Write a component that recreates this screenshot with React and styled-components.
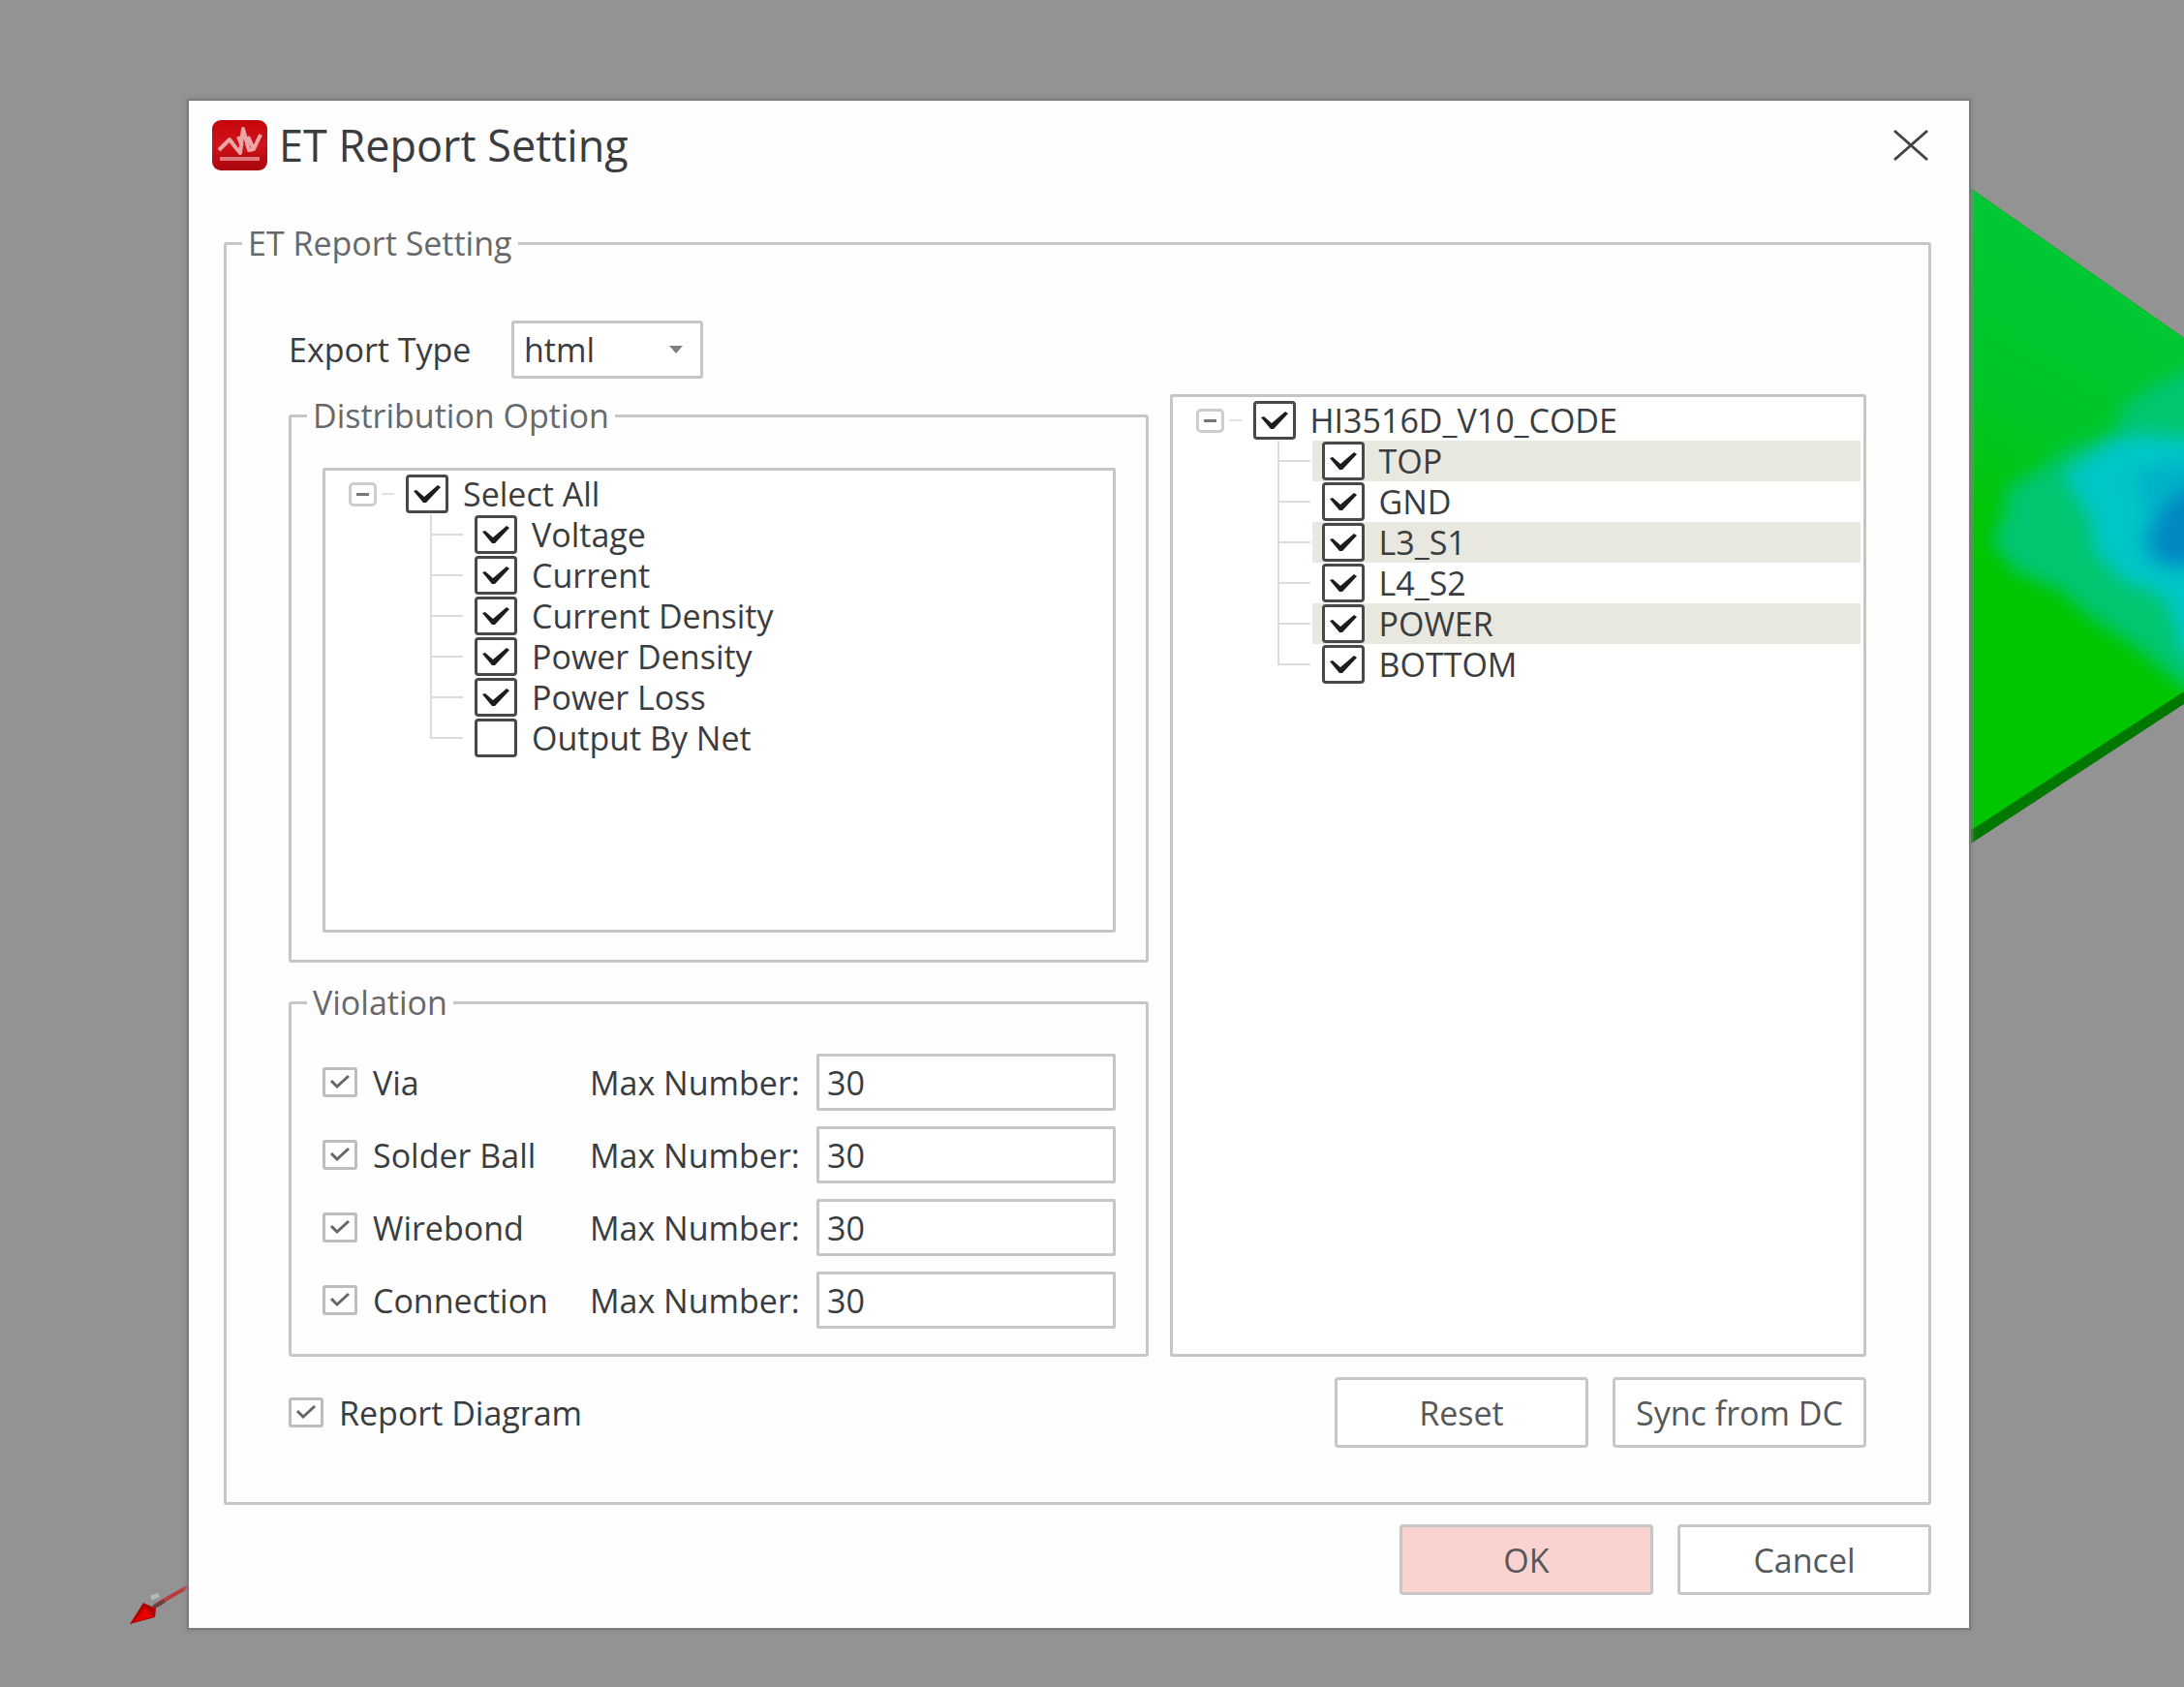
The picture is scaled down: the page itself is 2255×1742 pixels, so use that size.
import React, { Component } from "react";
import styled, { createGlobalStyle, css } from "styled-components";

const line = "#c6c6c6";
const text = "#3a3c3e";

const GlobalStyle = createGlobalStyle`
  * {
    box-sizing: border-box;
  }
  body {
    margin: 0;
    background: #939393;
    color: ${text};
    font-family: "Open Sans", "Noto Sans", sans-serif;
    font-size: 34px;
    line-height: 46px;
  }
  button,
  input,
  select {
    color: inherit;
    font: inherit;
  }
`;

const Viewport = styled.div`
  position: relative;
  min-height: 100vh;
  padding: 104px 222px 60px 195px;
  overflow: hidden;
`;

const BoardView = styled.svg`
  position: absolute;
  top: 90px;
  right: 0;
`;

const AxisArrow = styled.svg`
  position: absolute;
  left: 130px;
  bottom: 60px;
`;

const Dialog = styled.main`
  position: relative;
  background: #fefefe;
  box-shadow: 0 0 0 2px #7c7c7c, 0 0 5px 3px #858585;
`;

const TitleBar = styled.header`
  display: flex;
  align-items: center;
  height: 92px;
  padding: 0 39px 0 24px;
`;

const Title = styled.h1`
  flex: 1;
  margin: 0 0 0 12px;
  font-size: 45px;
  font-weight: 400;
  line-height: 60px;
`;

const CloseButton = styled.button`
  display: flex;
  padding: 0;
  border: 0;
  background: none;
`;

const Content = styled.div`
  padding: 32px 39px 0 36px;
`;

const Group = styled.fieldset`
  min-width: 0;
  margin: 0;
  padding: 0;
  border: 3px solid ${line};
  border-radius: 3px;
`;

const Legend = styled.legend`
  margin-left: 16px;
  padding: 0 6px;
  color: #66686a;
`;

const SettingBody = styled.div`
  padding: 57px 64px 56px;
`;

const Columns = styled.div`
  display: grid;
  grid-template-columns: 887fr 719fr;
  column-gap: 22px;
`;

const LeftColumn = styled.div`
  display: flex;
  flex-direction: column;
`;

const RightColumn = styled.div`
  display: flex;
  padding-top: 76px;
`;

const ExportRow = styled.div`
  display: flex;
  align-items: center;
  margin-bottom: 15px;

  label {
    width: 230px;
  }
`;

const SelectBox = styled.div`
  display: grid;
  align-items: center;
  width: 198px;
  height: 60px;

  > * {
    grid-area: 1 / 1;
  }
  svg {
    justify-self: end;
    margin-right: 21px;
    pointer-events: none;
  }
`;

const Select = styled.select`
  appearance: none;
  width: 100%;
  height: 100%;
  padding: 0 10px;
  border: 3px solid ${line};
  border-radius: 3px;
  background: #fff;
`;

const TreeArea = styled.div`
  padding: 31px 31px 28px 32px;
`;

const TreeBox = styled.div`
  flex: 1;
  min-height: 480px;
  padding-top: 3px;
  border: 3px solid ${line};
  border-radius: 2px;
  background: #fff;
`;

const TreeList = styled.ul`
  margin: 0;
  padding: 0 0 0 108px;
  list-style: none;
`;

const RootRow = styled.div`
  display: flex;
  align-items: center;
  height: 42px;
  padding-left: 24px;
`;

const Expander = styled.button`
  display: flex;
  align-items: center;
  justify-content: center;
  width: 29px;
  height: 25px;
  padding: 0;
  border: 3px solid #cdcdcd;
  border-radius: 5px;
  background: #fff;

  &::after {
    content: "";
    width: 13px;
    height: 3px;
    background: #777;
  }
`;

const Stub = styled.span`
  width: 13px;
  height: 2px;
  margin: 0 12px 0 5px;
  background: #e2e2e2;
`;

const TreeRow = styled.li`
  display: flex;
  height: 42px;
`;

const Connector = styled.span`
  display: flex;
  flex-direction: column;
  width: 34px;

  &::before,
  &::after {
    content: "";
    flex: 1;
    border-left: 2px solid #dcdcdc;
  }
  &::before {
    border-bottom: 2px solid #dcdcdc;
  }
  ${TreeRow}:last-child &::after {
    border-left-color: transparent;
  }
`;

const TreeLabel = styled.label`
  display: flex;
  flex: 1;
  align-items: center;
  gap: 15px;
  margin: 0 3px 0 2px;
  padding-left: 10px;
  background: ${props => (props.$striped ? "#e8e8e1" : "none")};
`;

const RootLabel = styled.label`
  display: flex;
  align-items: center;
  gap: 15px;
`;

const CheckFrame = styled.span`
  display: inline-grid;
  flex: none;

  > * {
    grid-area: 1 / 1;
  }
  svg {
    visibility: hidden;
    pointer-events: none;
  }
  input:checked + svg {
    visibility: visible;
  }
`;

const CheckInput = styled.input`
  appearance: none;
  margin: 0;
  background: #fff;
  ${props =>
    props.$large
      ? css`
          width: 44px;
          height: 40px;
          border: 3px solid #484848;
          border-radius: 4px;
        `
      : css`
          width: 36px;
          height: 31px;
          border: 3px solid #bdbdbd;
          border-radius: 3px;
        `}
`;

const ViolationGroup = styled(Group)`
  margin-top: 18px;
`;

const ViolationRows = styled.div`
  display: flex;
  flex-direction: column;
  gap: 16px;
  padding: 30px 31px 26px 32px;
`;

const ViolationRow = styled.div`
  display: grid;
  grid-template-columns: 276px 234px 1fr;
  align-items: center;
`;

const CheckLabel = styled.label`
  display: flex;
  align-items: center;
  gap: 16px;
`;

const NumberInput = styled.input`
  width: 100%;
  min-width: 0;
  height: 59px;
  padding: 0 8px;
  border: 3px solid ${line};
  border-radius: 2px;
  background: #fff;
`;

const SettingFooter = styled.div`
  display: flex;
  align-items: center;
  justify-content: space-between;
  margin-top: 21px;
`;

const Buttons = styled.div`
  display: flex;
  justify-content: flex-end;
  gap: 25px;
`;

const DialogActions = styled(Buttons)`
  padding: 20px 0 34px;
`;

const Button = styled.button`
  width: 262px;
  height: 73px;
  padding: 0;
  border: 3px solid ${line};
  border-radius: 4px;
  background: ${props => (props.$primary ? "#fad2d0" : "#fff")};
  color: #555759;
`;

const Check = ({ large, ...rest }) => (
  <CheckFrame>
    <CheckInput type="checkbox" $large={large} {...rest} />
    {large ? (
      <svg width="44" height="40" viewBox="0 0 44 40">
        <path d="M8 17 L11 16 L19 23 L33 11 L36 13 L21 29 L18 29 Z" fill="#1c1c1c" />
      </svg>
    ) : (
      <svg width="36" height="31" viewBox="0 0 36 31" fill="none">
        <path d="M9 14 L15 20 L27 9" stroke="#666" strokeWidth="3" />
      </svg>
    )}
  </CheckFrame>
);

const Tree = ({ root, items, striped, checked, onToggle }) => (
  <TreeBox>
    <RootRow>
      <Expander type="button" aria-label={"Collapse " + root} />
      <Stub />
      <RootLabel>
        <Check
          large
          checked={!!checked[root]}
          onChange={() => onToggle(root)}
        />
        {root}
      </RootLabel>
    </RootRow>
    <TreeList>
      {items.map((item, index) => (
        <TreeRow key={item}>
          <Connector />
          <TreeLabel $striped={striped && index % 2 === 0}>
            <Check
              large
              checked={!!checked[item]}
              onChange={() => onToggle(item)}
            />
            {item}
          </TreeLabel>
        </TreeRow>
      ))}
    </TreeList>
  </TreeBox>
);

const Logo = () => (
  <svg width="57" height="52" viewBox="0 0 57 52">
    <defs>
      <linearGradient id="logo" x1="0" y1="0" x2="0" y2="1">
        <stop offset="0" stopColor="#c4060c" />
        <stop offset="0.5" stopColor="#d0121a" />
        <stop offset="1" stopColor="#a8060c" />
      </linearGradient>
    </defs>
    <rect width="57" height="52" rx="9" fill="url(#logo)" />
    <path
      d="M7 31 L18 20 L24 28 L29 34 L32 9 L38 31 L43 30 L50 15 M27 17 L31 27 M37 17 L43 30"
      fill="none"
      stroke="#eda6a8"
      strokeWidth="4"
      strokeLinejoin="round"
    />
    <path d="M8 40 H49" stroke="#e07a7e" strokeWidth="4" />
  </svg>
);

const Board = () => (
  <BoardView width="355" height="800" viewBox="0 0 355 800">
    <defs>
      <linearGradient id="board" x1="0.4" y1="0" x2="0.2" y2="1">
        <stop offset="0.1" stopColor="#00c834" />
        <stop offset="0.35" stopColor="#00c628" />
        <stop offset="0.56" stopColor="#00c600" />
      </linearGradient>
      <clipPath id="boardTop">
        <path d="M100 80 L355 259 V624 L100 790 Z" />
      </clipPath>
      <filter id="soft" x="-20%" y="-20%" width="150%" height="140%">
        <feGaussianBlur stdDeviation="9" />
      </filter>
    </defs>
    <path d="M100 80 L355 259 V637 L100 804 Z" fill="#007800" />
    <g clipPath="url(#boardTop)">
      <rect x="100" y="80" width="255" height="720" fill="url(#board)" />
      <path
        d="M390 285 L355 293 L320 309 L290 332 L282 360 L233 374 L213 390 L173 413 L168 444 L155 469 L180 500 L227 520 L260 549 L300 574 L355 620 L390 640 Z"
        fill="#00c670"
        filter="url(#soft)"
      />
      <g filter="url(#soft)">
        <path
          d="M390 362 L355 362 L310 358 L277 366 L230 400 L257 444 L263 480 L293 510 L333 526 L347 561 L355 590 L390 600 Z"
          fill="#00c6c6"
        />
        <path
          d="M390 386 L340 386 L303 400 L315 440 L306 470 L320 496 L390 510 Z"
          fill="#00b2c8"
        />
        <path
          d="M390 408 L355 414 L333 434 L318 469 L328 490 L390 498 Z"
          fill="#0088c2"
        />
      </g>
    </g>
  </BoardView>
);

const violations = ["Via", "Solder Ball", "Wirebond", "Connection"];
const distributions = [
  "Voltage",
  "Current",
  "Current Density",
  "Power Density",
  "Power Loss",
  "Output By Net"
];
const layers = ["TOP", "GND", "L3_S1", "L4_S2", "POWER", "BOTTOM"];

const initialChecked = () => {
  const checked = { "Select All": true, HI3516D_V10_CODE: true };
  distributions.concat(layers).forEach(name => {
    checked[name] = name !== "Output By Net";
  });
  return checked;
};

class App extends Component {
  constructor(props) {
    super(props);
    this.state = { checked: initialChecked() };
  }
  toggleHandler = name => {
    this.setState(({ checked }) => ({
      checked: { ...checked, [name]: !checked[name] }
    }));
  };
  resetHandler = () => {
    this.setState({ checked: initialChecked() });
  };
  render() {
    return (
      <Viewport>
        <GlobalStyle />
        <Board />
        <AxisArrow width="70" height="50" viewBox="0 0 70 50">
          <path d="M30 26 L70 3" stroke="#b83c3c" strokeWidth="4" />
          <path d="M26 18 L34 15" stroke="#b4b8b6" strokeWidth="5" />
          <path d="M28 28 L40 21" stroke="#6a4040" strokeWidth="4" />
          <path d="M4 45 L18 23 L31 29 L30 38 Z" fill="#b00000" />
          <path d="M8 43 L20 28 L28 37 Z" fill="#e60000" />
        </AxisArrow>
        <Dialog>
          <TitleBar>
            <Logo />
            <Title>ET Report Setting</Title>
            <CloseButton type="button" aria-label="Close">
              <svg width="42" height="36" viewBox="0 0 42 36">
                <path
                  d="M4 3 L38 33 M38 3 L4 33"
                  stroke="#444"
                  strokeWidth="3"
                />
              </svg>
            </CloseButton>
          </TitleBar>
          <Content>
            <Group>
              <Legend>ET Report Setting</Legend>
              <SettingBody>
                <Columns>
                  <LeftColumn>
                    <ExportRow>
                      <label htmlFor="exportType">Export Type</label>
                      <SelectBox>
                        <Select id="exportType">
                          <option>html</option>
                        </Select>
                        <svg width="14" height="8" viewBox="0 0 14 8">
                          <path d="M0 0 H14 L7 8 Z" fill="#808080" />
                        </svg>
                      </SelectBox>
                    </ExportRow>
                    <Group>
                      <Legend>Distribution Option</Legend>
                      <TreeArea>
                        <Tree
                          root="Select All"
                          items={distributions}
                          checked={this.state.checked}
                          onToggle={this.toggleHandler}
                        />
                      </TreeArea>
                    </Group>
                    <ViolationGroup>
                      <Legend>Violation</Legend>
                      <ViolationRows>
                        {violations.map(name => (
                          <ViolationRow key={name}>
                            <CheckLabel>
                              <Check defaultChecked />
                              {name}
                            </CheckLabel>
                            <label htmlFor={"max" + name}>Max Number:</label>
                            <NumberInput
                              id={"max" + name}
                              type="text"
                              defaultValue="30"
                            />
                          </ViolationRow>
                        ))}
                      </ViolationRows>
                    </ViolationGroup>
                  </LeftColumn>
                  <RightColumn>
                    <Tree
                      striped
                      root="HI3516D_V10_CODE"
                      items={layers}
                      checked={this.state.checked}
                      onToggle={this.toggleHandler}
                    />
                  </RightColumn>
                </Columns>
                <SettingFooter>
                  <CheckLabel>
                    <Check defaultChecked />
                    Report Diagram
                  </CheckLabel>
                  <Buttons>
                    <Button type="button" onClick={this.resetHandler}>
                      Reset
                    </Button>
                    <Button type="button">Sync from DC</Button>
                  </Buttons>
                </SettingFooter>
              </SettingBody>
            </Group>
            <DialogActions>
              <Button type="button" $primary>
                OK
              </Button>
              <Button type="button">Cancel</Button>
            </DialogActions>
          </Content>
        </Dialog>
      </Viewport>
    );
  }
}

export default App;
